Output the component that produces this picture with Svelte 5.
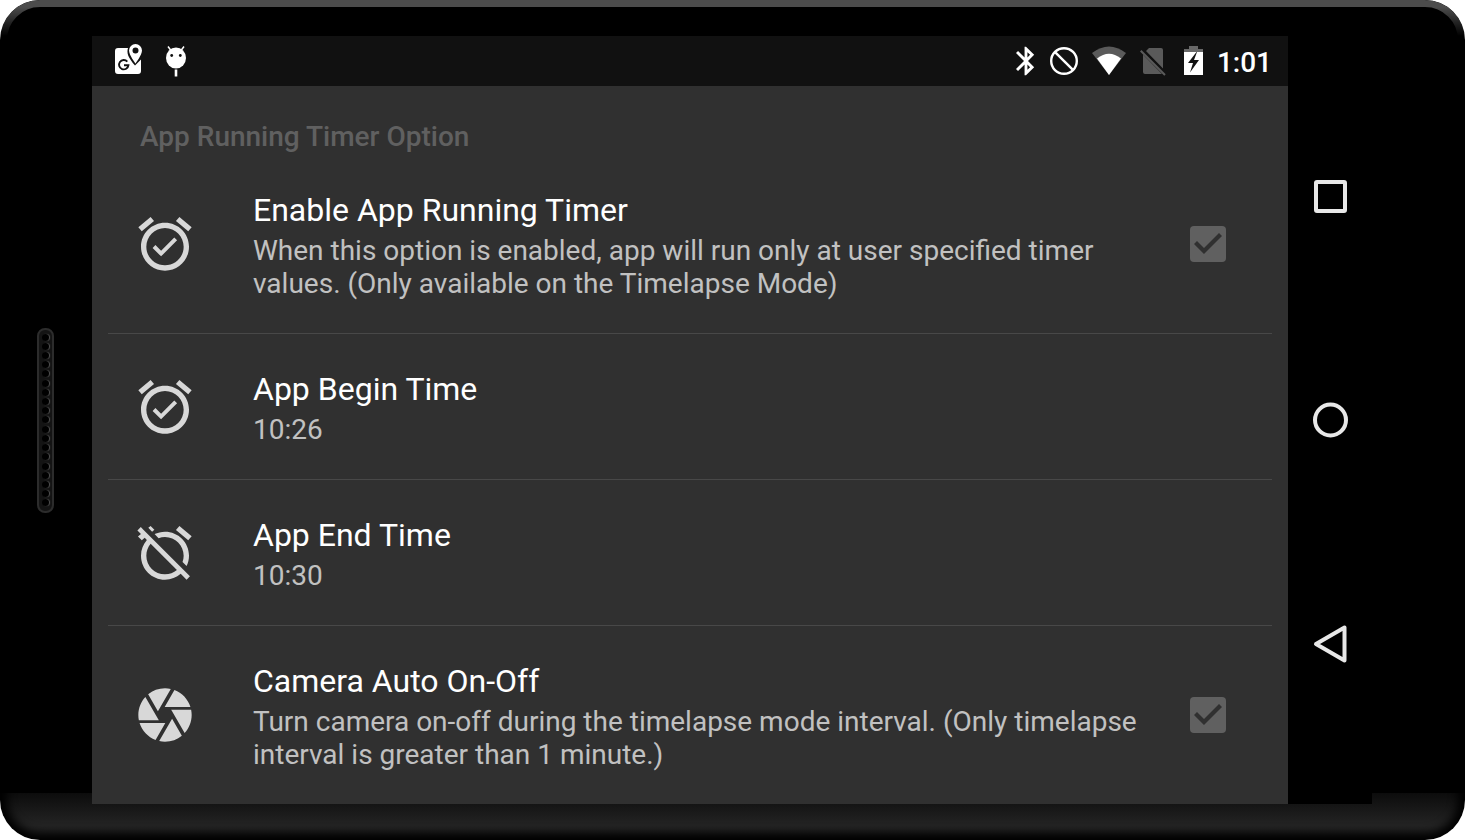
<script lang="ts">
    const icons: Record<string, string> = {
        alarmOn:
            "M22 5.72l-4.6-3.86-1.29 1.53 4.6 3.86L22 5.72zM7.88 3.39L6.6 1.86 2 5.71l1.29 1.53 4.59-3.85zM12 4c-4.97 0-9 4.03-9 9s4.02 9 9 9c4.97 0 9-4.03 9-9s-4.03-9-9-9zm0 16c-3.87 0-7-3.13-7-7s3.13-7 7-7 7 3.13 7 7-3.13 7-7 7zm-1.46-5.47L8.41 12.4l-1.06 1.06 3.18 3.18 6-6-1.06-1.06-4.93 4.95z",
        alarmOff:
            "M12 6c3.87 0 7 3.13 7 7 0 .84-.16 1.65-.43 2.4l1.52 1.52c.58-1.19.91-2.51.91-3.92 0-4.97-4.03-9-9-9-1.41 0-2.73.33-3.92.91L9.6 6.43C10.35 6.16 11.16 6 12 6zm10-.28l-4.6-3.86-1.29 1.53 4.6 3.86L22 5.72zM2.92 2.29L1.65 3.57 2.98 4.9l-1.11.93 1.42 1.42 1.11-.94.8.8C3.83 8.69 3 10.75 3 13c0 4.97 4.02 9 9 9 2.25 0 4.31-.83 5.89-2.2l2.2 2.2 1.27-1.27L3.89 3.27l-.97-.98zm13.55 16.1C15.26 19.39 13.7 20 12 20c-3.87 0-7-3.13-7-7 0-1.7.61-3.26 1.61-4.47l9.86 9.86zM8.02 3.28L6.6 1.86l-.86.71 1.42 1.42.86-.71z",
        camera:
            "M9.4 10.5l4.77-8.26C13.47 2.09 12.75 2 12 2c-2.4 0-4.6.85-6.32 2.25l3.66 6.35.06-.1zM21.54 9c-.92-2.92-3.15-5.26-6-6.34L11.88 9h9.66zm.26 1h-7.49l.29.5 4.76 8.25C21 16.97 22 14.61 22 12c0-.69-.07-1.35-.2-2zM8.54 12l-3.9-6.75C3.01 7.03 2 9.39 2 12c0 .69.07 1.35.2 2h7.49l-1.15-2zm-6.08 3c.92 2.92 3.15 5.26 6 6.34L12.12 15H2.46zm11.27 0l-3.9 6.76c.7.15 1.42.24 2.17.24 2.4 0 4.6-.85 6.32-2.25l-3.66-6.35-.93 1.6z",
    };

    const options = [
        {
            id: "timer",
            icon: "alarmOn",
            title: "Enable App Running Timer",
            summary:
                "When this option is enabled, app will run only at user specified timer values. (Only available on the Timelapse Mode)",
            check: true,
        },
        { id: "begin", icon: "alarmOn", title: "App Begin Time", summary: "10:26", check: false },
        { id: "end", icon: "alarmOff", title: "App End Time", summary: "10:30", check: false },
        {
            id: "camera",
            icon: "camera",
            title: "Camera Auto On-Off",
            summary:
                "Turn camera on-off during the timelapse mode interval. (Only timelapse interval is greater than 1 minute.)",
            check: true,
        },
    ];

    const holes = Array.from({ length: 19 }, (_, i) => i);
</script>

{#snippet rowBody(option: any)}
    <svg class="row-icon" viewBox="0 0 24 24" aria-hidden="true">
        <path d={icons[option.icon]} />
    </svg>
    <span class="text">
        <span class="title">{option.title}</span>
        <span class="summary">{option.summary}</span>
    </span>
{/snippet}

<div class="device">
    <div class="bezel">
        <div class="speaker">
            {#each holes as hole (hole)}
                <span class="hole"></span>
            {/each}
        </div>
    </div>

    <main class="screen">
        <header class="status-bar">
            <div class="notifications">
                <svg width="28" height="36" viewBox="0 0 28 36" aria-hidden="true">
                    <path
                        fill="#fff"
                        d="M3 5H13C11.500 10 13 14.500 20 22.500L26 16.500V28Q26 31 23 31H3Q0 31 0 28V8Q0 5 3 5Z"
                    />
                    <path
                        fill="#fff"
                        fill-rule="evenodd"
                        d="M20.500 1a6.500 6.500 0 0 0-6.500 6.500C14 12 20.500 20.500 20.500 20.500S27 12 27 7.500A6.500 6.500 0 0 0 20.500 1zm0 3.500a3 3 0 1 1 0 6 3 3 0 0 1 0-6z"
                    />
                    <path
                        fill="none"
                        stroke="#111"
                        stroke-width="1.900"
                        d="M12.300 18.600A4.700 4.700 0 1 0 13.400 22.300H9"
                    />
                </svg>
                <svg width="20" height="34" viewBox="0 0 20 34" aria-hidden="true">
                    <path fill="none" stroke="#fff" stroke-width="1.500" d="M2 2.500l3 4M18 2.500l-3 4" />
                    <ellipse cx="10" cy="14" rx="10" ry="10.500" fill="#fff" />
                    <circle cx="5.700" cy="11.500" r="1.400" fill="#111" />
                    <circle cx="14.300" cy="11.500" r="1.400" fill="#111" />
                    <path fill="#fff" d="M8.700 25.500h2.600v7H8.700z" />
                </svg>
            </div>
            <div class="system">
                <svg width="20" height="30" viewBox="5 2 14 20" fill="#fff" aria-hidden="true">
                    <path
                        d="M17.710 7.710L12 2h-1v7.590L6.410 5 5 6.410 10.590 12 5 17.590 6.410 19 11 14.410V22h1l5.710-5.710-4.300-4.290 4.300-4.290zM13 5.830l1.880 1.880L13 9.590V5.830zm1.880 10.460L13 18.170v-3.760l1.880 1.880z"
                    />
                </svg>
                <svg width="28" height="30" viewBox="1 0 28 30" fill="none" stroke="#fff" stroke-width="2.400" aria-hidden="true">
                    <circle cx="15" cy="15" r="12.800" />
                    <path d="M5.800 5.800l18.400 18.400" />
                </svg>
                <svg width="34" height="30" viewBox="0 0 34 30" aria-hidden="true">
                    <path fill="#5a5a5a" d="M0 7Q17-6 34 7L17 29z" />
                    <path fill="#fff" d="M5 12.500Q17 3 29 12.500L17 29z" />
                </svg>
                <svg width="30" height="30" viewBox="0 0 30 30" aria-hidden="true">
                    <path fill="#5a5a5a" d="M9 2H21Q23 2 23 4V22.500L6 5zM3 8.500L22 28H5Q3 28 3 26z" />
                    <path fill="none" stroke="#5a5a5a" stroke-width="2" d="M.7 4.700L25 29" />
                </svg>
                <svg width="19" height="30" viewBox="0 0 19 30" aria-hidden="true">
                    <path fill="#686868" d="M5 0h9v3h5v3H0V3h5z" />
                    <path fill="#fff" d="M0 6h19v23H0z" />
                    <path fill="#111" d="M12.500 6L4 17h5L6 26.500 15 14h-5l3-8z" />
                </svg>
                <time class="clock">1:01</time>
            </div>
        </header>

        <h1 class="category">App Running Timer Option</h1>
        <ul class="options">
            {#each options as option (option.id)}
                <li>
                    {#if option.check}
                        <label class="row" for={option.id}>
                            {@render rowBody(option)}
                            <input class="check" id={option.id} type="checkbox" checked disabled />
                        </label>
                    {:else}
                        <button class="row" type="button">{@render rowBody(option)}</button>
                    {/if}
                </li>
            {/each}
        </ul>
    </main>

    <nav class="nav">
        <button type="button" aria-label="Recent apps">
            <svg viewBox="0 0 40 40"><rect x="6" y="6" width="29" height="29" rx="1" /></svg>
        </button>
        <button type="button" aria-label="Home">
            <svg viewBox="0 0 40 40"><circle cx="20.500" cy="20" r="15.500" /></svg>
        </button>
        <button type="button" aria-label="Back">
            <svg viewBox="0 0 40 40"><path d="M34.500 3.500V36.500L6 20z" /></svg>
        </button>
    </nav>
</div>

<style>
    :global(body) {
        background: #fff;
    }

    .device {
        position: relative;
        box-sizing: border-box;
        min-height: 100vh;
        padding: 36px 93px 36px 0;
        display: flex;
        border-radius: 40px;
        background: linear-gradient(#0c0c0c, #242424 70%, #202020) bottom / 100% 47px no-repeat #000;
        box-shadow: inset 0 0 10px 7px #000;
        font-family: Roboto, sans-serif;
    }

    /* light catching the top edge of the frame */
    .device::before {
        content: "";
        position: absolute;
        inset: 0;
        border: 7px solid #4c4c4c;
        border-radius: 40px;
        mask-image: linear-gradient(#000 7px, transparent 36px);
        pointer-events: none;
    }

    .bezel {
        width: 92px;
        flex-shrink: 0;
        display: flex;
        align-items: center;
    }

    .speaker {
        box-sizing: border-box;
        width: 17px;
        height: 185px;
        margin-left: 37px;
        padding: 4px 0;
        display: flex;
        flex-direction: column;
        align-items: center;
        justify-content: space-between;
        border: 2px solid #2c2c2c;
        border-radius: 8px;
        background: #141414;
    }

    .hole {
        width: 7px;
        height: 7px;
        border-radius: 50%;
        background: #000;
        box-shadow: 1px 0 1px #555;
    }

    .screen {
        flex: 1;
        min-width: 0;
        background: #303030;
        color: #fff;
    }

    .status-bar {
        height: 50px;
        padding: 0 16px 0 23px;
        display: flex;
        align-items: center;
        justify-content: space-between;
        background: #111;
    }

    .notifications {
        display: flex;
        align-items: center;
        gap: 23px;
    }

    .system {
        display: flex;
        align-items: center;
        gap: 14px;
    }

    .clock {
        padding-top: 4px;
        font-size: 28px;
        line-height: 32px;
        font-weight: 500;
    }

    .category {
        margin: 0;
        padding: 34px 48px 2px;
        font-size: 28px;
        line-height: 33px;
        font-weight: 500;
        color: #606060;
    }

    .options {
        margin: 0 16px;
        padding: 0;
        list-style: none;
    }

    .options li + li {
        border-top: 1px solid #484848;
    }

    .row {
        box-sizing: border-box;
        width: 100%;
        padding: 33px 46px 33px 25px;
        display: flex;
        align-items: center;
        border: 0;
        background: none;
        color: inherit;
        font-family: inherit;
        text-align: left;
    }

    .row-icon {
        width: 64px;
        height: 64px;
        margin-right: 56px;
        flex-shrink: 0;
        fill: #d8d8d8;
    }

    .text {
        flex: 1;
        padding-top: 3px;
        display: flex;
        flex-direction: column;
        gap: 5px;
    }

    .title {
        font-size: 32px;
        line-height: 38px;
    }

    .summary {
        font-size: 28px;
        line-height: 33px;
        color: #c1c1c1;
    }

    .check {
        appearance: none;
        width: 36px;
        height: 36px;
        margin: 0 0 0 40px;
        flex-shrink: 0;
        border-radius: 4px;
        background: #606060;
    }

    .check:checked::before {
        content: "";
        display: block;
        height: 36px;
        background: #303030;
        clip-path: polygon(14px 28px, 4px 18px, 7px 15px, 14px 22px, 29px 7px, 32px 10px);
    }

    .nav {
        width: 84px;
        flex-shrink: 0;
        display: flex;
        flex-direction: column;
        justify-content: center;
        gap: 140px;
        background: #000;
    }

    .nav button {
        height: 84px;
        padding: 0;
        display: flex;
        align-items: center;
        justify-content: center;
        border: 0;
        background: none;
    }

    .nav svg {
        width: 40px;
        height: 40px;
        fill: none;
        stroke: #e8e8e8;
        stroke-width: 4;
        stroke-linejoin: round;
    }
</style>
